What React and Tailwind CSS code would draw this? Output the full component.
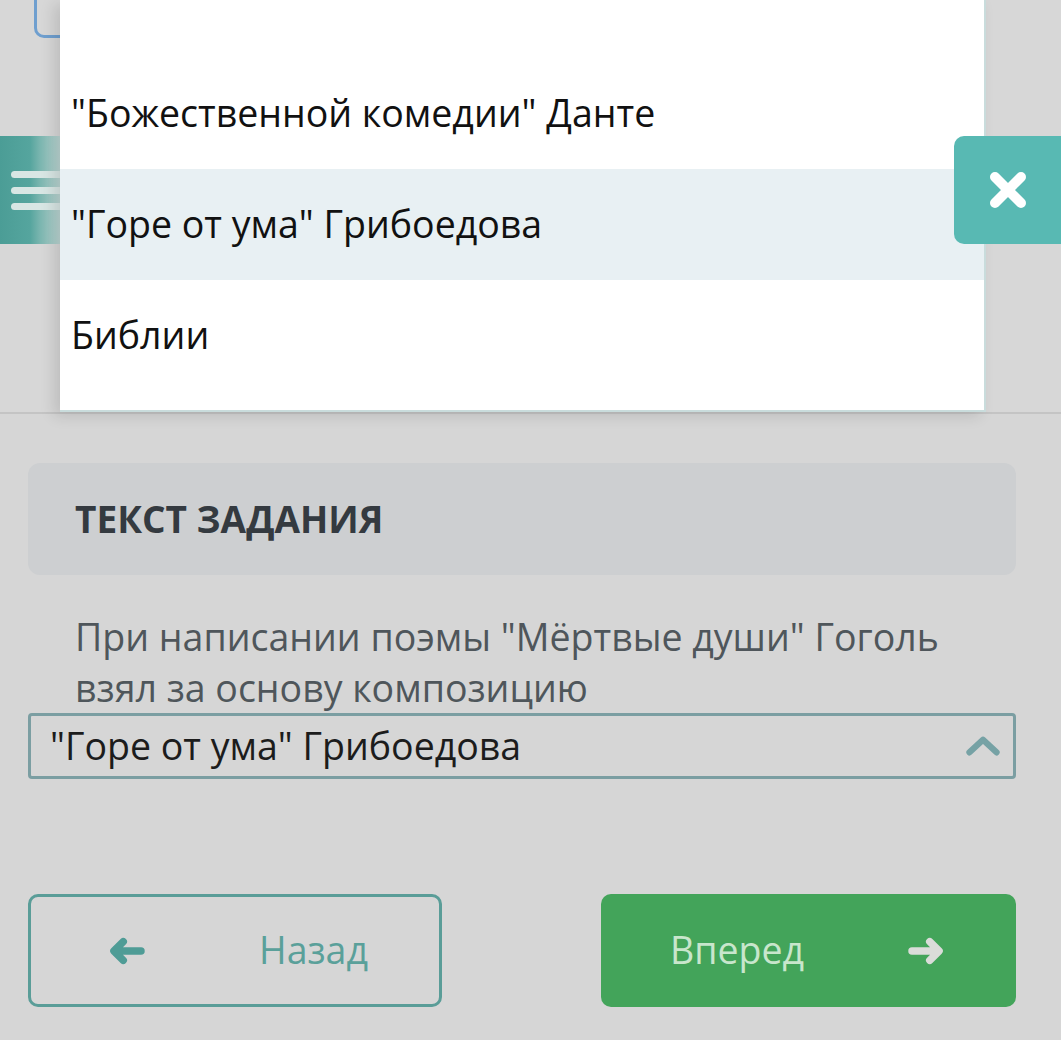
import React from 'react';

const font = { fontFamily: '"Open Sans", "Noto Sans", sans-serif' };

function ArrowLeft({ className }) {
  return (
    <svg viewBox="0 0 40 30" className={className} fill="none" stroke="currentColor" strokeWidth="8" strokeLinecap="round" strokeLinejoin="round">
      <path d="M35 15H7M16 5L6 15l10 10" />
    </svg>
  );
}

function ArrowRight({ className }) {
  return (
    <svg viewBox="0 0 40 30" className={className} fill="none" stroke="currentColor" strokeWidth="8" strokeLinecap="round" strokeLinejoin="round">
      <path d="M5 15h28M24 5l10 10-10 10" />
    </svg>
  );
}

function Dropdown() {
  const items = ['"Божественной комедии" Данте', '"Горе от ума" Грибоедова', 'Библии'];
  return (
    <div className="absolute left-[60px] top-0 h-[412px] w-[926px] border-r-2 border-b-2 border-[#c9dcdc] bg-white shadow-[-6px_4px_14px_rgba(0,0,0,0.12)]">
      <div className="h-[58px]" />
      {items.map((t, i) => (
        <div key={t} className={`flex h-[111px] items-center pl-[11px] text-[37.5px] text-[#111] ${i === 1 ? 'bg-[#e8f0f3]' : ''}`}>
          {t}
        </div>
      ))}
    </div>
  );
}

export default function App() {
  return (
    <div style={font} className="relative h-[1040px] w-[1061px] overflow-hidden bg-[#d6d6d6]">
      {/* underlying header area */}
      <div className="relative h-[414px] border-b-2 border-[#c4c4c4] bg-[#d7d7d7]">
        <div className="absolute left-[34px] top-[-40px] h-[78px] w-[60px] rounded-[10px] border-[3px] border-[#6f9fcf]" />
        <div className="absolute left-0 top-[136px] flex h-[108px] w-[60px] flex-col justify-center gap-[9px] bg-gradient-to-r from-[#4b9d96] via-[#55a59e] to-[#bcd6d3] pl-[11px]">
          <div className="h-[7px] w-[60px] rounded-full bg-[#d8e6e4]" />
          <div className="h-[7px] w-[60px] rounded-full bg-[#d8e6e4]" />
          <div className="h-[7px] w-[60px] rounded-full bg-[#d8e6e4]" />
        </div>
      </div>

      <div className="pl-[28px] pr-[45px] pt-[49px]">
        <div className="flex h-[112px] items-center rounded-[12px] bg-[#cdcfd1] pl-[47px]">
          <span className="text-[37px] font-bold text-[#343a40]">ТЕКСТ ЗАДАНИЯ</span>
        </div>
        <p className="mt-[36px] pl-[47px] pr-[30px] text-[37.5px] leading-[51px] text-[#4f565b]">
          При написании поэмы "Мёртвые души" Гоголь взял за основу композицию
        </p>
        <div className="flex h-[66px] items-center justify-between rounded-[4px] border-[3px] border-[#7b9ea2] pl-[19px] pr-[12px]">
          <span className="text-[37.5px] text-[#1c1c1c]">"Горе от ума" Грибоедова</span>
          <svg viewBox="0 0 40 24" className="h-[22px] w-[36px]" fill="none" stroke="#76a2a5" strokeWidth="7" strokeLinecap="round" strokeLinejoin="round">
            <path d="M5 19L20 5l15 14" />
          </svg>
        </div>

        <div className="mt-[115px] flex justify-between">
          <button className="flex h-[113px] w-[414px] items-center rounded-[10px] border-[3px] border-[#5a9d98] pl-[77px] text-[37.5px] text-[#5aa09a]">
            <ArrowLeft className="h-[28px] w-[38px] text-[#4f9c96]" />
            <span className="ml-[113px]">Назад</span>
          </button>
          <button className="flex h-[113px] w-[415px] items-center rounded-[10px] bg-[#43a45a] pl-[69px] text-[37.5px] text-[#c8e6cc]">
            <span>Вперед</span>
            <ArrowRight className="ml-[103px] h-[28px] w-[38px] text-[#dadcd9]" />
          </button>
        </div>
      </div>

      <Dropdown />

      <div className="absolute left-[954px] top-[136px] flex h-[108px] w-[107px] items-center justify-center rounded-l-[10px] bg-[#58b9b3]">
        <svg viewBox="0 0 40 40" className="h-[40px] w-[40px]" fill="none" stroke="white" strokeWidth="10" strokeLinecap="round">
          <path d="M7 7l26 26M33 7L7 33" />
        </svg>
      </div>
    </div>
  );
}
